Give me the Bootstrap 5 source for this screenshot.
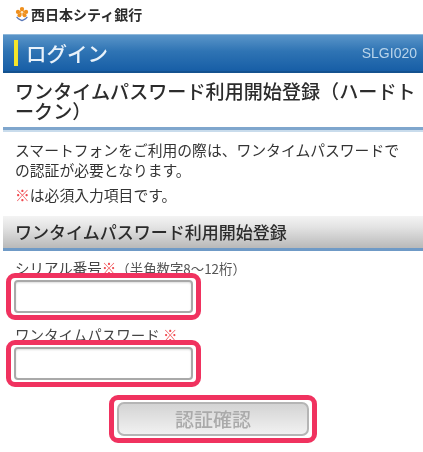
<!DOCTYPE html>
<html lang="ja">
<head>
<meta charset="utf-8">
<title>ログイン</title>
<link href="https://cdn.jsdelivr.net/npm/bootstrap@5.3.0/dist/css/bootstrap.min.css" rel="stylesheet">
<style>
html,body{background:#fff;overflow:hidden}
body{font-family:"Noto Sans CJK JP","Liberation Sans",sans-serif;color:#333;width:423px;height:452px;filter:blur(.35px)}
.pagewrap{padding-left:3px}
.brand{height:34px;padding:6px 0 0 12px;gap:2px}
.brand-name{font-size:14px;font-weight:700;line-height:16px;color:#2b2b2b}
.titlebar{height:39px;background:linear-gradient(#5a95c9,#2f74b4 45%,#175ea6);border-top:1px solid #8fb8da;border-bottom:2px solid #14528f;padding:0 6px 0 11px}
.titlemark{width:4px;height:26px;background:#f5e52a;margin-right:8px}
.titletext{font-size:20.5px;line-height:26px;font-weight:500;color:#e9f2fa}
.pagecode{font-family:"Liberation Sans",sans-serif;font-size:14px;color:#b9d4ea}
.pagehead{height:57px;margin:0;padding:8px 0 0 12px;font-size:19.1px;line-height:20px;font-weight:500;color:#2c2c2c;border-bottom:3px solid #7fa6cd;box-shadow:0 2px 0 #c9dcec;word-break:break-all}
.intro{padding:10px 18px 0 12px;font-size:14.8px;line-height:20px;color:#333;margin:0}
.note{padding:5px 0 0 12px;font-size:14.8px;line-height:20px;margin:0;color:#333}
.req{color:#f0494f}
.sectionbar{height:35px;margin-top:11px;background:linear-gradient(#f4f4f4,#e3e3e3 35%,#b9b9b9);border-bottom:3px solid #6f9ac6;padding:0 0 0 12px;font-size:17px;line-height:32px;font-weight:500;color:#2b2b2b}
.fieldlabel{display:block;margin:0 0 -5px;padding-left:12px;font-size:14.5px;line-height:20px;color:#444}
.hint{font-size:13.4px;color:#555}
.firstlabel{padding-top:7px}
.secondlabel{margin-top:5px}
.hilite{position:relative;width:195px;height:47px;margin-left:3px;border:5px solid #f0325f;border-radius:9px;padding:2px 3px;background:#fff}
.boxinput{display:block;width:100%;height:33px;border:2px solid #a9a9a9;border-radius:4px;background:#fff;box-shadow:inset 0 1px 2px #ddd}
.btnhilite{width:208px;height:48px;margin:8px 0 0 106px;border:5px solid #f0325f;border-radius:9px;padding:2px 3px;background:#fff}
.confirmbtn{width:192px;height:34px;padding:0;border:2px solid #b5b5b5;border-radius:7px;background:linear-gradient(#d4d4d4,#f1f1f1);color:#aaa;font-size:19px;font-weight:500;line-height:28px;opacity:1}
.confirmbtn:disabled{background:linear-gradient(#d4d4d4,#f1f1f1);color:#aaa;border-color:#b5b5b5;opacity:1}
</style>
</head>
<body>
<div class="pagewrap">
  <div class="brand d-flex align-items-start">
    <svg width="14" height="16" viewBox="0 0 17 18" aria-hidden="true">
      <g fill="#ef8f1c"><circle cx="8.5" cy="3" r="2.6"/><circle cx="3.6" cy="6.5" r="2.6"/><circle cx="13.4" cy="6.5" r="2.6"/><circle cx="5.4" cy="10.6" r="2.4"/><circle cx="11.6" cy="10.6" r="2.4"/><circle cx="8.5" cy="7" r="3"/></g>
      <circle cx="8.5" cy="7" r="1.6" fill="#fbe9c8"/>
      <path d="M2 12.5c2 3 4.500 3.500 6.500 4.500 2-1 4.500-1.500 6.500-4.500" fill="none" stroke="#5a78b8" stroke-width="1.600"/>
    </svg>
    <span class="brand-name">西日本シティ銀行</span>
  </div>
  <div class="titlebar d-flex align-items-center">
    <span class="titlemark"></span>
    <span class="titletext">ログイン</span>
    <span class="pagecode ms-auto">SLGI020</span>
  </div>
  <h1 class="pagehead">ワンタイムパスワード利用開始登録（ハードトークン）</h1>
  <p class="intro">スマートフォンをご利用の際は、ワンタイムパスワードでの認証が必要となります。</p>
  <p class="note"><span class="req">※</span>は必須入力項目です。</p>
  <div class="sectionbar">ワンタイムパスワード利用開始登録</div>
  <form>
    <label class="fieldlabel firstlabel" for="serial">シリアル番号<span class="req">※</span><span class="hint">（半角数字8～12桁）</span></label>
    <div class="hilite"><input class="boxinput" id="serial" type="text"></div>
    <label class="fieldlabel secondlabel" for="otp">ワンタイムパスワード <span class="req">※</span></label>
    <div class="hilite"><input class="boxinput" id="otp" type="text"></div>
    <div class="btnhilite"><button class="btn confirmbtn" type="button" disabled>認証確認</button></div>
  </form>
</div>
<script src="https://cdn.jsdelivr.net/npm/bootstrap@5.3.0/dist/js/bootstrap.bundle.min.js"></script>
</body>
</html>
